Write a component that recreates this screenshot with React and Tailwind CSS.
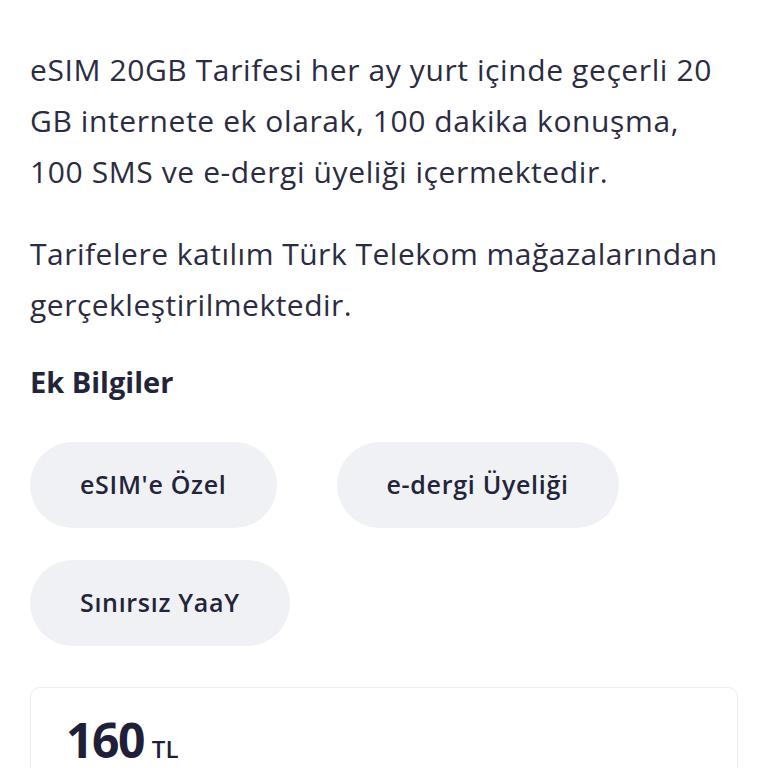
const chips = ["eSIM'e Özel", "e-dergi Üyeliği", "Sınırsız YaaY"];

export default function App() {
  return (
    <div className="min-h-[768px] bg-white text-[#2b2c42] overflow-hidden" style={{ fontFamily: "'Open Sans', 'Noto Sans', sans-serif" }}>
      <div className="px-[30px] pt-[44px]">
        <p className="text-[30px] leading-[51px] tracking-[0.6px]">
          eSIM 20GB Tarifesi her ay yurt içinde geçerli 20<br />
          GB internete ek olarak, 100 dakika konuşma,<br />
          100 SMS ve e-dergi üyeliği içermektedir.
        </p>
        <p className="mt-[31px] text-[30px] leading-[51px] tracking-[0.5px]">
          Tarifelere katılım Türk Telekom mağazalarından<br />
          gerçekleştirilmektedir.
        </p>
        <h2 className="mt-[32px] text-[29px] font-bold leading-[40px] text-[#23243a]">Ek Bilgiler</h2>
        <div className="mt-[40px] flex flex-wrap gap-x-[60px] gap-y-[32px]">
          {chips.map((c) => (
            <div
              key={c}
              className="h-[86px] px-[50px] rounded-full bg-[#f0f1f4] flex items-center text-[25px] tracking-[0.7px] font-semibold text-[#23243a]"
            >
              {c}
            </div>
          ))}
        </div>
        <div className="mt-[41px] w-[708px] h-[200px] rounded-[10px] border border-[#ececef] px-[35px] pt-[28px]">
          <div className="flex items-baseline gap-[8px] text-[#1f2038]">
            <span className="text-[48px] font-bold leading-none tracking-[-1.5px]">160</span>
            <span className="text-[24px] font-semibold">TL</span>
          </div>
        </div>
      </div>
    </div>
  );
}
